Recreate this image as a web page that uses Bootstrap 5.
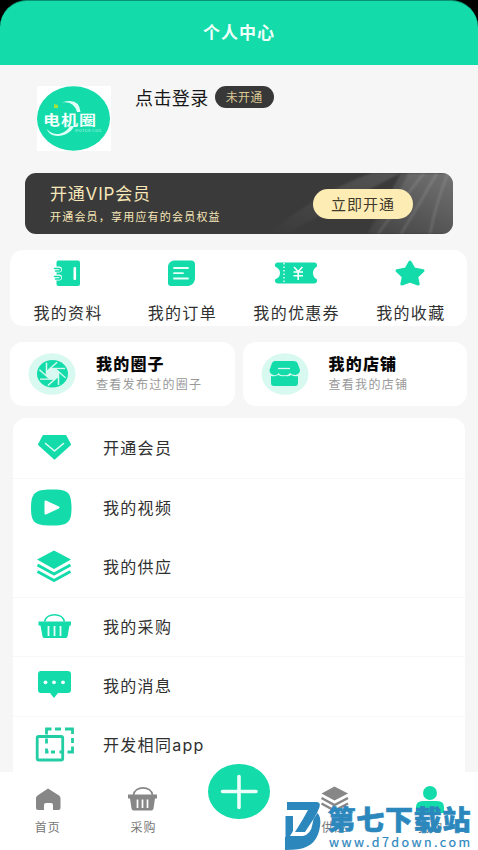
<!DOCTYPE html>
<html lang="zh-CN">
<head>
<meta charset="utf-8">
<meta name="viewport" content="width=device-width, initial-scale=1">
<title>个人中心</title>
<link href="https://cdn.jsdelivr.net/npm/bootstrap@5.3.0/dist/css/bootstrap.min.css" rel="stylesheet">
<style>
:root{--brand:#13dbaa}
html,body{height:850px;overflow:hidden}
body{background:#f6f6f6;font-family:"Noto Sans CJK SC",sans-serif;color:#303030;line-height:1;letter-spacing:1px}
svg{display:block;flex:none}
.g{fill:var(--brand)}
.latin{font-family:Inter,"Noto Sans CJK SC",sans-serif}
.screen{width:478px;height:850px}
.topbar{height:65px;background:#000}
.topbar-in{background:var(--brand);border-radius:27px 27px 0 0;border-top:1px solid #0b9272;font-size:17px;color:#effff9;padding-bottom:3px}
.profile{height:108px;padding:21px 0 0 37px}
.uname{font-size:18px;letter-spacing:.4px;color:#161616;margin:2px 6px 0 24px;line-height:18px}
.pill{width:59px;height:22px;background:#383838;color:#dcc996;font-size:12px;letter-spacing:.3px}
.vip{height:61px;margin:0 25px;border-radius:11px;background:#3a3a3a;color:#f7e7b8;overflow:hidden}
.vip-bg{left:0;top:0}
.vip-title{font-size:17px;line-height:20px;letter-spacing:.8px}
.vip-sub{font-size:11px;line-height:14px;letter-spacing:1.2px;margin-top:5px}
.vip-text{padding-left:25px}
.vip-btn{width:100px;height:30px;background:#feecb5;color:#3f3a2c;font-size:15px;margin-right:40px}
.quick{height:76px;margin:16px 11px 0 10px;border-radius:13px}
.quick .col{font-size:16px;padding-top:8px}
.quick span{margin:14px 0 0 2px;line-height:20px;letter-spacing:1.3px}
.duo{margin:16px 11px 0 10px;gap:8px}
.duo-card{height:64px;border-radius:13px;padding-left:18px}
.duo-t{font-size:16px;line-height:20px;letter-spacing:1.2px;color:#080808;font-weight:900;margin-top:-3px}
.duo-s{font-size:12px;line-height:16px;color:#999;letter-spacing:1.3px;margin-top:3px}
.menu{height:354px;margin:12px 13px 0;border-radius:13px 13px 0 0}
.menu-row{height:59.5px;padding-left:17px;font-size:16px;letter-spacing:1.3px}
.menu-row+.menu-row{border-top:1px solid #f7f7f7}
.menu-row.plain{border-top-color:#fff!important}
.menu-row svg{margin-right:25px}
.menu-row span{margin-top:-2px}
.tabs{height:78px;font-size:12px;color:#777;letter-spacing:1px}
.tabs .tab{width:95.6px;padding-top:13px}
.tabs .tab span{margin-top:4px;line-height:18px}
.plus{margin-top:-21px}
.stamp{left:282px;top:798px}
</style>
<script src="https://cdn.jsdelivr.net/npm/bootstrap@5.3.0/dist/js/bootstrap.bundle.min.js"></script>
</head>
<body>
<div class="screen position-relative overflow-hidden d-flex flex-column">
<header class="topbar flex-shrink-0"><div class="topbar-in h-100 d-flex align-items-center justify-content-center fw-bold">个人中心</div></header>

<section class="profile d-flex align-items-start flex-shrink-0">
<svg width="74" height="65" viewBox="37 86 74 65"><path fill="#fff" d="M37 86h74v65H37z"/><ellipse class="g" cx="73.500" cy="118.500" rx="36.500" ry="32.300"/><path fill="#dffff6" d="M62 102.500Q79 97 80.500 112h-3.500Q74 101 62 102.500zM47 129c3 11 23 8 27-3h-4c-5 9-17 11-23 3z"/><path fill="#a5e23c" d="M54 104l4 1v3l-4 0z"/><text transform="translate(43 124.500) scale(1 .8)" font-size="17" font-weight="700" fill="#f2fffb" textLength="53" letter-spacing="0">电机圈</text><text x="75" y="132" font-size="4" fill="#a9f7e2" textLength="27" letter-spacing="0">MOTOR COIL</text></svg>
<div class="uname">点击登录</div><div class="pill rounded-pill d-flex align-items-center justify-content-center">未开通</div>
</section>

<section class="vip position-relative flex-shrink-0">
<svg class="vip-bg position-absolute" width="428" height="61" viewBox="25 173 428 61"><defs><linearGradient id="ray" x1="1" y1="0" x2="0" y2="1"><stop stop-color="#fff" stop-opacity=".16"/><stop offset="1" stop-color="#fff" stop-opacity="0"/></linearGradient><filter id="soft"><feGaussianBlur stdDeviation="1.200"/></filter></defs><g filter="url(#soft)"><path fill="url(#ray)" d="M372 173h90v61h-95q20-35 34-61-60 31-115 61h-18q54-44 104-61z"/><path fill="url(#ray)" d="M408 173h54v61h-94q26-30 40-61z"/><path fill="none" stroke="#fff" stroke-opacity=".15" stroke-width="2" d="M424 173q-22 28-46 61M437 173q-17 30-36 61M448 173q-12 30-18 61"/></g></svg>
<div class="position-relative h-100 d-flex align-items-center justify-content-between">
<div class="vip-text"><div class="vip-title latin">开通VIP会员</div><div class="vip-sub">开通会员，享用应有的会员权益</div></div>
<div class="vip-btn rounded-pill d-flex align-items-center justify-content-center">立即开通</div>
</div>
</section>

<section class="quick bg-white d-flex flex-shrink-0">
<div class="col d-flex flex-column align-items-center"><svg width="44" height="30" viewBox="46 258 44 30"><rect class="g" x="57.500" y="260.500" width="23.500" height="25.500" rx="2"/><rect x="74.500" y="267" width="2.600" height="13" rx="1" fill="#fff"/><path fill="none" stroke="#fff" stroke-width="6" stroke-linecap="round" d="M56 269.500h4M56 277.500h4"/><path fill="none" stroke="#13dbaa" stroke-width="1.600" stroke-linecap="round" d="M55.500 268.500h4q2 0 2 1.300t-2 1.200h-3M55.500 276.500h4q2 0 2 1.300t-2 1.200h-3"/></svg><span>我的资料</span></div>
<div class="col d-flex flex-column align-items-center"><svg width="44" height="30" viewBox="159 258 44 30"><path class="g" d="M174 260.500h17q4 0 4 4V279q-1 6-7 7h-17q-3 0-3-3V266q1-5 6-5.500z"/><path stroke="#e7fff8" stroke-width="1.800" stroke-linecap="round" d="M174 268h14M174 273.200h9M174 278.500h14"/></svg><span>我的订单</span></div>
<div class="col d-flex flex-column align-items-center"><svg width="44" height="30" viewBox="274 258 44 30"><path class="g" d="M277.500 262.500h37q2.500 0 2.500 3v1q-4 2-4 6.500t4 6.500v1q0 3-3 3h-36q-3 0-3-3v-1q5-2 5-6.500t-5-6.500v-1q0-3 2.500-3z"/><path stroke="#fff" stroke-width="1.300" stroke-dasharray="1.500 2" d="M284 263v21"/><path fill="none" stroke="#fff" stroke-width="1.600" d="M294 267l4.200 4.500 4.200-4.500M293.500 272h9.500M293.500 275.800h9.500M298.200 271.500v8.500"/></svg><span>我的优惠券</span></div>
<div class="col d-flex flex-column align-items-center"><svg width="44" height="30" viewBox="388 258 44 30"><path class="g" stroke="#13dbaa" stroke-width="3" stroke-linejoin="round" d="M410 262l4 7 9 1.700-6.300 6 1.500 7.300-8.200-3-8.200 3 1.500-7.300-6.300-6 9-1.700z"/></svg><span>我的收藏</span></div>
</section>

<section class="duo d-flex flex-shrink-0">
<div class="duo-card bg-white d-flex align-items-center col"><svg width="48" height="42" viewBox="28 353 48 42"><ellipse cx="52" cy="374" rx="23.500" ry="20.800" fill="#d7f9ef"/><ellipse class="g" cx="52.500" cy="373.800" rx="15.500" ry="13.800"/><g transform="translate(52.500 373.800) scale(1 .89)"><path id="hub" fill="#d7f9ef" d="M-2.500-6h5L6-2.500v5L2.500 6h-5L-6 2.500v-5z"/><g fill="none" stroke="#d7f9ef" stroke-width="1.500"><path d="M-6 2.500v-15"/><path d="M-6 2.500v-15" transform="rotate(45)"/><path d="M-6 2.500v-15" transform="rotate(90)"/><path d="M-6 2.500v-15" transform="rotate(135)"/><path d="M-6 2.500v-15" transform="rotate(180)"/><path d="M-6 2.500v-15" transform="rotate(225)"/><path d="M-6 2.500v-15" transform="rotate(270)"/><path d="M-6 2.500v-15" transform="rotate(315)"/></g></g></svg><div class="ms-3 ps-1"><div class="duo-t">我的圈子</div><div class="duo-s">查看发布过的圈子</div></div></div>
<div class="duo-card bg-white d-flex align-items-center col"><svg width="48" height="42" viewBox="261 353 48 42"><ellipse cx="285" cy="374" rx="23.500" ry="20.800" fill="#d7f9ef"/><path class="g" d="M276 361h18q3 0 4 2l2.500 7q0 4-4.500 5-4 0-5.500-2-2.500 3-5.500 2-4 1-6-2-2 3-5 2-4-1-4-5l2.500-7q1-2 3-2z" transform="translate(-.500 0)"/><path class="g" d="M271 376q4 1 7-1 4 2 7 1 4 1 6-1 4 2 7 1V383q0 3-3 3h-21q-3 0-3-3z"/><path stroke="#d7f9ef" stroke-width="1.300" d="M278 368.500h12"/></svg><div class="ms-3 ps-1"><div class="duo-t">我的店铺</div><div class="duo-s">查看我的店铺</div></div></div>
</section>

<section class="menu bg-white flex-shrink-0 overflow-hidden">
<div class="menu-row d-flex align-items-center"><svg width="48" height="44" viewBox="30 426 48 44"><path class="g" stroke="#13dbaa" stroke-width="2" stroke-linejoin="round" d="M43.500 436h22l4.500 8.500-15.500 14-15.500-14z"/><path fill="none" stroke="#dffcf3" stroke-width="1.600" stroke-linecap="round" stroke-linejoin="round" d="M45.500 443.500l9 7.500 9-7.500"/></svg><span>开通会员</span></div>
<div class="menu-row d-flex align-items-center"><svg width="48" height="44" viewBox="30 485.500 48 44"><path class="g" d="M51 489c17 0 20 2 20.500 18 0 16-4 18-20.500 18s-20-3-20-18c0-14 4-18 20-18z"/><path fill="#fff" stroke="#fff" stroke-width="2" stroke-linejoin="round" d="M45.500 501l13 6-13 6z"/></svg><span>我的视频</span></div>
<div class="menu-row plain d-flex align-items-center"><svg width="48" height="44" viewBox="30 545 48 44"><path class="g" d="M54 550.500l17 9-17 9.500-17-9.500z"/><path fill="none" stroke="#13dbaa" stroke-width="3" stroke-linejoin="round" d="M37.500 565l16.500 9 16.500-9M37.500 571.500l16.500 9 16.500-9"/></svg><span>我的供应</span></div>
<div class="menu-row d-flex align-items-center"><svg width="48" height="44" viewBox="30 605.500 48 44"><path fill="none" stroke="#13dbaa" stroke-width="1.700" d="M44.500 622c2-9 18-9 20 0"/><path class="g" d="M38.500 622H71v4h-1.500l-2 11q-.5 1.500-2 1.500h-21q-1.500 0-2-1.500l-2-11h-2z"/><path stroke="#e8fff8" stroke-width="1.800" d="M48.500 626.500v10M54.500 626.500v10M60.500 626.500v10"/></svg><span>我的采购</span></div>
<div class="menu-row d-flex align-items-center"><svg width="48" height="44" viewBox="30 664 48 44"><path class="g" d="M41 671h26.500q3.500 0 3.500 3v16q0 3-3.500 3H58l-4 5-4-5h-9q-3 0-3-3v-16q0-3 3-3z"/><g fill="#efffff"><circle cx="45.500" cy="682.300" r="1.900"/><circle cx="54" cy="682.300" r="1.900"/><circle cx="63" cy="682.300" r="1.900"/></g></svg><span>我的消息</span></div>
<div class="menu-row d-flex align-items-center"><svg width="48" height="44" viewBox="30 724.500 48 44"><g fill="none" stroke="#23cda4" stroke-width="2.800"><rect x="37.200" y="737" width="25.500" height="23.500" rx="1.500"/><path d="M46.500 735v-5.500h5M55 729.500h6M65 729.500h7.500v5M72.500 738.500v5M72.500 747v5.500h-5M63.500 752.500h-4M55 752.500h-4M46.500 749v3.500h2M46.500 739v5"/></g></svg><span class="latin">开发相同app</span></div>
</section>

<nav class="tabs bg-white d-flex flex-shrink-0">
<div class="tab d-flex flex-column align-items-center"><svg width="32" height="29" viewBox="31 785 32 29"><path fill="#878787" d="M47 788.500l11 7q1.500 1 1.500 3V808q0 2-2 2H52v-5q0-2-2-2h-5q-2 0-2 2v5h-6q-2 0-2-2v-10q0-1.500 1.500-2.500z"/></svg><span>首页</span></div>
<div class="tab d-flex flex-column align-items-center"><svg width="32" height="29" viewBox="127 785 32 29"><path fill="none" stroke="#878787" stroke-width="1.700" d="M133.500 795c1-9.500 18-9.500 19 0"/><path fill="#878787" d="M128 794.500h29v4h-2l-1.500 10q-.5 2-2 2h-18q-1.500 0-2-2l-1.500-10h-2z"/><path stroke="#fff" stroke-width="1.700" d="M137.500 799.500v8.500M142.500 799.500v8.500M147.500 799.500v8.500"/></svg><span>采购</span></div>
<div class="tab d-flex flex-column align-items-center"><svg class="plus" width="62" height="56" viewBox="208 764 62 56"><ellipse class="g" cx="239" cy="791.500" rx="31" ry="27.500"/><path stroke="#eafff9" stroke-width="3.600" stroke-linecap="round" d="M222.500 791.500h33.500M239 776.500v31"/></svg></div>
<div class="tab d-flex flex-column align-items-center"><svg width="32" height="29" viewBox="319 785 32 29"><path fill="#878787" d="M334.500 786.500l13.500 7-13.500 7-13-7z"/><path fill="none" stroke="#878787" stroke-width="2.500" d="M321.500 798l13 7 13.500-7M321.500 803.500l13 7 13.500-7"/></svg><span>供应</span></div>
<div class="tab d-flex flex-column align-items-center"><svg width="32" height="29" viewBox="414 785 32 29"><circle class="g" cx="430" cy="793" r="7"/><path class="g" d="M416 813v-6q0-6 7-6h14q7 0 7 6v6z"/></svg><span>我的</span></div>
</nav>

<svg class="stamp position-absolute" width="196" height="52" viewBox="282 798 196 52"><g fill="#2c87bd"><path d="M287 802h29q5 0 3.500 5-2 6-6 12l-8.500 13h-10l8-13 5-9h-21z"/><path d="M285.500 816h7.500v15l-3 5h13q8-2 9.500-12l1-5 4-6q4 4 2.500 13-2 16-14 21-5 3-21 3v-13h.5z"/><text transform="translate(327.500 829.500) scale(1 .96)" font-size="28" font-weight="900" stroke="#2c87bd" stroke-width=".6" textLength="143" letter-spacing="0">第七下载站</text><text x="329" y="847" font-size="12.500" textLength="141" letter-spacing="0" stroke="#2c87bd" stroke-width=".2">www.d7down.com</text></g></svg>
</div>
</body>
</html>
